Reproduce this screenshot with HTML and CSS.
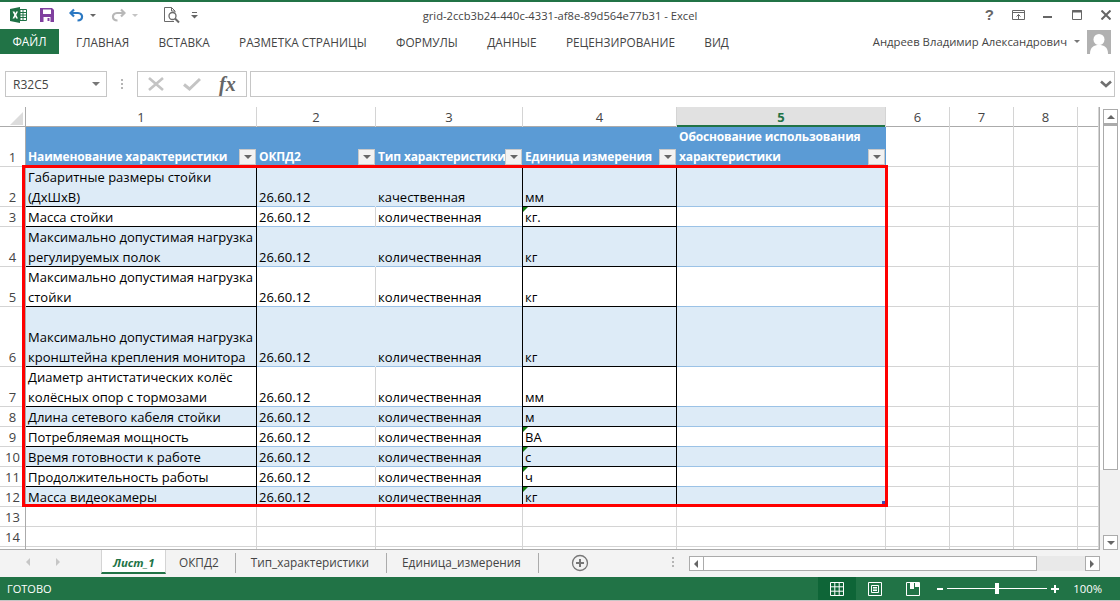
FILE: index.html
```html
<!DOCTYPE html>
<html lang="ru">
<head>
    <meta charset="UTF-8">
    <title>grid-2ccb3b24-440c-4331-af8e-89d564e77b31 - Excel</title>
    <link rel="stylesheet" href="styles.css">
</head>
<body>
<div class="app">
    <div class="titlebar">
        <div class="qat">
            <svg class="qat-excel" width="17" height="16" viewBox="0 0 17 16"><path d="M0 2 10 0V16L0 14Z" fill="#1e7145"/><path d="M10 2.5H16.5V13.5H10Z" fill="#fff" stroke="#1e7145"/><path d="M10 5.5H16M10 8H16M10 10.500H16M13 3V13" stroke="#1e7145"/><path d="M2.500 4.500H4.500L5.300 6.500 6.200 4.500H8L6.300 8 8 11.500H6.100L5.200 9.400 4.300 11.500H2.500L4.300 8Z" fill="#fff"/></svg>
            <svg class="qat-save" width="14" height="14" viewBox="0 0 14 14"><path d="M0 0H12L14 2V14H0Z" fill="#80409f"/><path d="M3 1.500H11V6H3Z" fill="#fff"/><path d="M3.500 9H10.500V14H3.500Z" fill="#fff"/><path d="M7.500 10H9.500V13H7.500Z" fill="#80409f"/></svg>
            <svg class="qat-undo" width="15" height="14" viewBox="0 0 15 14"><path d="M5 1.500 1.500 5 5 8.500" fill="none" stroke="#2b78c2" stroke-width="2.200"/><path d="M2 5H9C14.500 5 14.500 12.500 8.500 12.500" fill="none" stroke="#2b78c2" stroke-width="2.200"/></svg>
            <span class="qat-arrow"></span>
            <svg class="qat-redo" width="15" height="14" viewBox="0 0 15 14"><path d="M10 1.500 13.500 5 10 8.500" fill="none" stroke="#b8b8b8" stroke-width="2.200"/><path d="M13 5H6C.5 5 .5 12.500 6.500 12.500" fill="none" stroke="#b8b8b8" stroke-width="2.200"/></svg>
            <span class="qat-arrow qat-arrow-off"></span>
            <svg class="qat-preview" width="16" height="17" viewBox="0 0 16 17"><path d="M10 14.500H.5V.5H7.500L11 4V5.500" fill="none" stroke="#6a6a6a"/><path d="M7.500.5V4H11" fill="none" stroke="#6a6a6a"/><circle cx="8.500" cy="9" r="3.500" fill="#fff" stroke="#6a6a6a" stroke-width="1.300"/><path d="M11 11.500 15 15.500" stroke="#6a6a6a" stroke-width="2"/></svg>
            <svg class="qat-more" width="7" height="7" viewBox="0 0 7 7"><path d="M1 .5H6" stroke="#666"/><path d="M0 3H7L3.500 6.500Z" fill="#666"/></svg>
        </div>
        <div class="doc-title">grid-2ccb3b24-440c-4331-af8e-89d564e77b31 - Excel</div>
        <div class="winctl">
            <span class="help">?</span>
            <svg class="ctl-display" width="13" height="10" viewBox="0 0 13 10"><path d="M.5.5H12.500V9.500H.5Z" fill="none" stroke="#666"/><path d="M.5 2.500H12.500" stroke="#666"/><path d="M6.500 9V4.500M4.500 6.500 6.500 4.500 8.500 6.500" fill="none" stroke="#666"/></svg>
            <svg class="ctl-min" width="9" height="10" viewBox="0 0 9 10"><path d="M0 7H9" stroke="#666" stroke-width="2"/></svg>
            <svg class="ctl-max" width="10" height="10" viewBox="0 0 10 10"><path d="M.5.5H9.500V9.500H.5Z" fill="none" stroke="#666"/><path d="M0 1.500H10" stroke="#666" stroke-width="2"/></svg>
            <svg class="ctl-close" width="10" height="10" viewBox="0 0 10 10"><path d="M.5.5 9.500 9.500M9.500.5 .5 9.500" stroke="#666" stroke-width="2"/></svg>
        </div>
    </div>

    <div class="ribbon-tabs">
        <div class="file-tab">ФАЙЛ</div>
        <nav class="tab-list">
            <span>ГЛАВНАЯ</span>
            <span>ВСТАВКА</span>
            <span>РАЗМЕТКА СТРАНИЦЫ</span>
            <span>ФОРМУЛЫ</span>
            <span>ДАННЫЕ</span>
            <span>РЕЦЕНЗИРОВАНИЕ</span>
            <span>ВИД</span>
        </nav>
        <div class="user">
            <span class="user-name">Андреев Владимир Александрович</span>
            <span class="user-arrow"></span>
            <svg class="avatar" width="24" height="24" viewBox="0 0 24 24"><path d="M0 0H24V24H0Z" fill="#b1b1b1"/><circle cx="12" cy="9.500" r="5.500" fill="#fff"/><path d="M3 24C3 17 7 15 12 15S21 17 21 24Z" fill="#fff"/></svg>
        </div>
    </div>

    <div class="formula-bar">
        <div class="name-box"><span>R32C5</span><i class="name-arrow"></i></div>
        <div class="dots"></div>
        <div class="fx-box">
            <svg width="18" height="16" viewBox="0 0 18 16"><path d="M2 2 16 14M16 2 2 14" stroke="#c4c4c4" stroke-width="2.600"/></svg>
            <svg width="18" height="14" viewBox="0 0 18 14"><path d="M1 7.500 6.500 12 17 2" fill="none" stroke="#c4c4c4" stroke-width="3"/></svg>
            <span class="fx">fx</span>
        </div>
        <div class="formula-input">
            <svg width="12" height="8" viewBox="0 0 12 8"><path d="M1 1.500 6 6 11 1.500" fill="none" stroke="#707070" stroke-width="2.600"/></svg>
        </div>
    </div>

    <div class="sheet-area">
        <div class="grid-wrap">
            <table class="grid">
                <colgroup>
                    <col class="w-head"><col class="w-1"><col class="w-2"><col class="w-3"><col class="w-4"><col class="w-5"><col class="w-n"><col class="w-n"><col class="w-n"><col class="w-last">
                </colgroup>
                <tr class="col-head">
                    <td class="corner"><svg width="13" height="13" viewBox="0 0 13 13"><path d="M13 0V13H0Z" fill="#dcdcdc"/></svg></td>
                    <td>1</td><td>2</td><td>3</td><td>4</td><td class="col-on">5</td><td>6</td><td>7</td><td>8</td><td></td>
                </tr>
                <tr class="h40 tbl-head">
                    <td class="rn">1</td>
                    <td>Наименование характеристики<i class="filter"></i></td>
                    <td>ОКПД2<i class="filter"></i></td>
                    <td>Тип характеристики<i class="filter"></i></td>
                    <td>Единица измерения<i class="filter"></i></td>
                    <td>Обоснование использования<br>характеристики<i class="filter"></i></td>
                    <td class="e"></td><td class="e"></td><td class="e"></td><td class="e"></td>
                </tr>
                <tr class="h40 stripe">
                    <td class="rn">2</td><td class="c1">Габаритные размеры стойки<br>(ДхШхВ)</td><td class="c2">26.60.12</td><td class="c3">качественная</td><td class="c4">мм</td><td class="c5"></td>
                    <td class="e"></td><td class="e"></td><td class="e"></td><td class="e"></td>
                </tr>
                <tr>
                    <td class="rn">3</td><td class="c1">Масса стойки</td><td class="c2">26.60.12</td><td class="c3">количественная</td><td class="c4 mark">кг.</td><td class="c5"></td>
                    <td class="e"></td><td class="e"></td><td class="e"></td><td class="e"></td>
                </tr>
                <tr class="h40 stripe">
                    <td class="rn">4</td><td class="c1">Максимально допустимая нагрузка<br>регулируемых полок</td><td class="c2">26.60.12</td><td class="c3">количественная</td><td class="c4">кг</td><td class="c5"></td>
                    <td class="e"></td><td class="e"></td><td class="e"></td><td class="e"></td>
                </tr>
                <tr class="h40">
                    <td class="rn">5</td><td class="c1">Максимально допустимая нагрузка<br>стойки</td><td class="c2">26.60.12</td><td class="c3">количественная</td><td class="c4">кг</td><td class="c5"></td>
                    <td class="e"></td><td class="e"></td><td class="e"></td><td class="e"></td>
                </tr>
                <tr class="h60 stripe">
                    <td class="rn">6</td><td class="c1">Максимально допустимая нагрузка<br>кронштейна крепления монитора</td><td class="c2">26.60.12</td><td class="c3">количественная</td><td class="c4">кг</td><td class="c5"></td>
                    <td class="e"></td><td class="e"></td><td class="e"></td><td class="e"></td>
                </tr>
                <tr class="h40">
                    <td class="rn">7</td><td class="c1">Диаметр антистатических колёс<br>колёсных опор с тормозами</td><td class="c2">26.60.12</td><td class="c3">количественная</td><td class="c4">мм</td><td class="c5"></td>
                    <td class="e"></td><td class="e"></td><td class="e"></td><td class="e"></td>
                </tr>
                <tr class="stripe">
                    <td class="rn">8</td><td class="c1">Длина сетевого кабеля стойки</td><td class="c2">26.60.12</td><td class="c3">количественная</td><td class="c4">м</td><td class="c5"></td>
                    <td class="e"></td><td class="e"></td><td class="e"></td><td class="e"></td>
                </tr>
                <tr>
                    <td class="rn">9</td><td class="c1">Потребляемая мощность</td><td class="c2">26.60.12</td><td class="c3">количественная</td><td class="c4 mark">ВА</td><td class="c5"></td>
                    <td class="e"></td><td class="e"></td><td class="e"></td><td class="e"></td>
                </tr>
                <tr class="stripe">
                    <td class="rn">10</td><td class="c1">Время готовности к работе</td><td class="c2">26.60.12</td><td class="c3">количественная</td><td class="c4 mark">с</td><td class="c5"></td>
                    <td class="e"></td><td class="e"></td><td class="e"></td><td class="e"></td>
                </tr>
                <tr>
                    <td class="rn">11</td><td class="c1">Продолжительность работы</td><td class="c2">26.60.12</td><td class="c3">количественная</td><td class="c4 mark">ч</td><td class="c5"></td>
                    <td class="e"></td><td class="e"></td><td class="e"></td><td class="e"></td>
                </tr>
                <tr class="stripe">
                    <td class="rn">12</td><td class="c1">Масса видеокамеры</td><td class="c2">26.60.12</td><td class="c3">количественная</td><td class="c4 mark">кг</td><td class="c5"></td>
                    <td class="e"></td><td class="e"></td><td class="e"></td><td class="e"></td>
                </tr>
                <tr>
                    <td class="rn">13</td><td class="e"></td><td class="e"></td><td class="e"></td><td class="e"></td><td class="e"></td>
                    <td class="e"></td><td class="e"></td><td class="e"></td><td class="e"></td>
                </tr>
                <tr>
                    <td class="rn">14</td><td class="e"></td><td class="e"></td><td class="e"></td><td class="e"></td><td class="e"></td>
                    <td class="e"></td><td class="e"></td><td class="e"></td><td class="e"></td>
                </tr>
                <tr>
                    <td class="rn"></td><td class="e"></td><td class="e"></td><td class="e"></td><td class="e"></td><td class="e"></td>
                    <td class="e"></td><td class="e"></td><td class="e"></td><td class="e"></td>
                </tr>
            </table>
            <div class="selection"><i class="sel-handle"></i></div>
        </div>
        <div class="vscroll">
            <div class="vscroll-top">
                <div class="sbtn"><i class="arr-up"></i></div>
                <div class="vthumb"></div>
            </div>
            <div class="vscroll-rest">
                <div class="sbtn"><i class="arr-down"></i></div>
            </div>
        </div>
    </div>

    <div class="sheet-tabs">
        <div class="tab-nav"><i class="nav-left"></i><i class="nav-right"></i></div>
        <div class="sheet-tab on">Лист_1</div>
        <div class="sheet-tab tab-short">ОКПД2</div>
        <div class="sheet-tab">Тип_характеристики</div>
        <div class="sheet-tab">Единица_измерения</div>
        <svg class="add-sheet" width="18" height="18" viewBox="0 0 18 18"><circle cx="9" cy="9" r="7.500" fill="none" stroke="#777" stroke-width="1.300"/><path d="M9 5V13M5 9H13" stroke="#777" stroke-width="2"/></svg>
        <div class="dots tabs-dots"></div>
        <div class="hscroll">
            <div class="sbtn"><i class="arr-left"></i></div>
            <div class="hthumb"></div>
            <div class="htrack"></div>
            <div class="sbtn"><i class="arr-right"></i></div>
        </div>
    </div>

    <div class="statusbar">
        <span class="ready">ГОТОВО</span>
        <div class="status-right">
            <div class="view on">
                <svg width="14" height="14" viewBox="0 0 14 14"><path d="M.5.5H13.500V13.500H.5ZM.5 4.800H13.500M.5 9.200H13.500M4.800.5V13.500M9.200.5V13.500" fill="none" stroke="#fff"/></svg>
            </div>
            <div class="view">
                <svg width="14" height="14" viewBox="0 0 14 14"><path d="M.5.5H13.500V13.500H.5Z" fill="none" stroke="#fff"/><path d="M3.500 3.500H10.500V10.500H3.500ZM5 5.500H9M5 7H9M5 8.500H9" fill="none" stroke="#fff"/></svg>
            </div>
            <div class="view">
                <svg width="14" height="14" viewBox="0 0 14 14"><path d="M.5.5H13.500V13.500H.5Z" fill="none" stroke="#fff"/><path d="M4 1H8V7H4ZM9 1H13V5H9Z" fill="#fff"/></svg>
            </div>
            <div class="zoom">
                <span class="zoom-minus"></span>
                <div class="slider"><i class="slider-thumb"></i></div>
                <span class="zoom-plus"></span>
            </div>
            <span class="zoom-val">100%</span>
        </div>
    </div>
</div>
</body>
</html>
```

FILE: styles.css
```css
* {
    box-sizing: border-box;
}

html, body {
    margin: 0;
    padding: 0;
    background: #fff;
}

body {
    font-family: "Open Sans", "Noto Sans", sans-serif;
    color: #444;
    overflow: hidden;
}

.app {
    width: 1120px;
    height: 601px;
    display: flex;
    flex-direction: column;
    border-top: 2px solid #217346;
    border-bottom: 1px solid #c6c6c6;
    overflow: hidden;
}

/* title bar */
.titlebar {
    height: 27px;
    flex: none;
    display: grid;
    grid-template-columns: 1fr auto 1fr;
    align-items: center;
}

.qat {
    display: flex;
    align-items: center;
    padding-left: 10px;
    padding-bottom: 1px;
}

.qat-save { margin-left: 13px; }
.qat-undo { margin-left: 15px; }
.qat-redo { margin-left: 15px; }
.qat-preview { margin-left: 26px; }
.qat-more { margin-left: 11px; }

.qat-arrow {
    width: 0;
    height: 0;
    margin-left: 6px;
    border-left: 3px solid transparent;
    border-right: 3px solid transparent;
    border-top: 3px solid #666;
}

.qat-arrow-off {
    border-top-color: #c4c4c4;
}

.doc-title {
    font-size: 11.200px;
    color: #444;
}

.winctl {
    display: flex;
    align-items: center;
    justify-content: flex-end;
    padding-right: 9px;
    padding-bottom: 2px;
}

.help {
    font-family: "Liberation Sans", sans-serif;
    font-weight: bold;
    font-size: 15px;
    color: #666;
    line-height: 14px;
    margin-right: 18px;
}

.ctl-min { margin-left: 18px; }
.ctl-max { margin-left: 20px; }
.ctl-close { margin-left: 19px; }

/* ribbon tabs */
.ribbon-tabs {
    height: 25px;
    flex: none;
    display: flex;
    align-items: center;
    font-size: 11.800px;
}

.file-tab {
    width: 59px;
    height: 25px;
    line-height: 24px;
    text-align: center;
    background: #217346;
    color: #fff;
}

.tab-list {
    display: flex;
    gap: 29.300px;
    margin-left: 17px;
    flex: 1;
}

.user {
    display: flex;
    align-items: center;
    padding-right: 9px;
}

.user-name {
    font-size: 11.300px;
}

.user-arrow {
    width: 0;
    height: 0;
    margin: 0 7px 0 7px;
    border-left: 3px solid transparent;
    border-right: 3px solid transparent;
    border-top: 3px solid #777;
}

/* formula bar */
.formula-bar {
    height: 26px;
    flex: none;
    margin: 17px 0 10px;
    padding: 0 5px;
    display: flex;
}

.name-box {
    width: 102px;
    border: 1px solid #c6c6c6;
    display: flex;
    align-items: center;
    justify-content: space-between;
    padding: 0 6px 0 7px;
    font-size: 12px;
}

.name-arrow {
    width: 0;
    height: 0;
    border-left: 4px solid transparent;
    border-right: 4px solid transparent;
    border-top: 4px solid #777;
}

.dots {
    width: 2px;
    height: 10px;
    margin: 8px 14px 0 14px;
    background: repeating-linear-gradient(#b5b5b5 0 2px, transparent 2px 4px);
}

.fx-box {
    width: 110px;
    border: 1px solid #c6c6c6;
    display: flex;
    align-items: center;
    padding-left: 9px;
    gap: 18px;
}

.fx {
    font-family: "Liberation Serif", serif;
    font-style: italic;
    font-weight: bold;
    font-size: 20px;
    color: #666;
    line-height: 20px;
}

.formula-input {
    flex: 1;
    margin-left: 3px;
    border: 1px solid #c6c6c6;
    display: flex;
    align-items: center;
    justify-content: flex-end;
    padding-right: 2px;
}

/* sheet */
.sheet-area {
    height: 443px;
    flex: none;
    display: flex;
}

.grid-wrap {
    position: relative;
    width: 1100px;
    height: 443px;
    overflow: hidden;
    border-right: 1px solid #ababab;
    border-bottom: 1px solid #ababab;
}

.grid {
    table-layout: fixed;
    width: 1099px;
    border-collapse: separate;
    border-spacing: 0;
    font-family: "Open Sans", "Noto Sans", sans-serif;
    font-size: 13px;
    color: #000;
}

.w-head { width: 26px; }
.w-1 { width: 231px; }
.w-2 { width: 119px; }
.w-3 { width: 147px; }
.w-4 { width: 154px; }
.w-5 { width: 209px; }
.w-n { width: 64px; }
.w-last { width: 21px; }

.grid tr {
    height: 20px;
}

.grid tr.h40 {
    height: 40px;
}

.grid tr.h60 {
    height: 60px;
}

/* the bottom line is a shadow so that a 20px text line fills a 20px row */
.grid td {
    --line: #d4d4d4;
    padding: 0 0 0 2px;
    vertical-align: bottom;
    line-height: 20px;
    white-space: nowrap;
    overflow: hidden;
    border-right: 1px solid #d4d4d4;
    box-shadow: inset 0 -1px 0 var(--line);
}

.col-head td {
    --line: #ababab;
    padding: 0;
    text-align: center;
    color: #444;
    line-height: 19px;
    vertical-align: middle;
}

.col-head .corner {
    border-right-color: #ababab;
    padding: 2px 2px 0 0;
    text-align: right;
}

.corner svg {
    display: block;
    margin-left: auto;
}

.col-head .col-on {
    background: #e1e1e1;
    color: #217346;
    font-weight: bold;
    box-shadow: inset 0 -2px 0 #217346;
}

.grid .rn {
    padding: 0;
    text-align: center;
    color: #444;
    border-right-color: #ababab;
}

.tbl-head td:not(.rn):not(.e) {
    --line: #5b9bd5;
    position: relative;
    background: #5b9bd5;
    color: #fff;
    font-size: 12px;
    font-weight: bold;
    letter-spacing: -0.150px;
    border-right-color: #5b9bd5;
}

.filter {
    position: absolute;
    right: 0;
    bottom: 2px;
    width: 17px;
    height: 16px;
    background: #f2f2f2;
    border: 1px solid #c9c9c9;
}

.filter::after {
    content: "";
    position: absolute;
    left: 4px;
    top: 5px;
    border-left: 4px solid transparent;
    border-right: 4px solid transparent;
    border-top: 4px solid #666;
}

.stripe td:not(.rn):not(.e) {
    background: #ddebf7;
}

.grid .c1,
.grid .c4 {
    --line: #000;
    border-right-color: #000;
}

.grid .c3 {
    --line: #9bc2e6;
    border-right-color: #000;
}

.grid .c2,
.grid .c5 {
    --line: #9bc2e6;
}

.stripe .c2 {
    border-right-color: #ddebf7;
}

.mark {
    position: relative;
}

.mark::before {
    content: "";
    position: absolute;
    left: 0;
    top: 0;
    border-top: 5px solid #107c10;
    border-right: 5px solid transparent;
}

.selection {
    position: absolute;
    left: 22px;
    top: 58px;
    width: 866px;
    height: 342px;
    border: 3px solid #f00;
}

.sel-handle {
    position: absolute;
    right: 0;
    bottom: 0;
    width: 3px;
    height: 3px;
    background: #3f51b5;
}

/* scrollbars */
.vscroll {
    flex: 1;
    display: flex;
    flex-direction: column;
}

.vscroll-top {
    padding: 2px 2px 0 3px;
}

.vthumb {
    height: 346px;
    border: 1px solid #ababab;
    border-top-width: 2px;
}

.vscroll-rest {
    flex: 1;
    background: #f1f1f1;
    padding: 0 2px 0 3px;
    display: flex;
    align-items: flex-end;
}

.sbtn {
    width: 15px;
    height: 15px;
    flex: none;
    background: #fff;
    border: 1px solid #ababab;
    display: flex;
    align-items: center;
    justify-content: center;
}

.arr-up,
.arr-down,
.arr-left,
.arr-right,
.nav-left,
.nav-right {
    width: 0;
    height: 0;
}

.arr-up {
    border-left: 4px solid transparent;
    border-right: 4px solid transparent;
    border-bottom: 4px solid #666;
}

.arr-down {
    border-left: 4px solid transparent;
    border-right: 4px solid transparent;
    border-top: 4px solid #666;
}

.arr-left {
    border-top: 4px solid transparent;
    border-bottom: 4px solid transparent;
    border-right: 4px solid #666;
}

.arr-right {
    border-top: 4px solid transparent;
    border-bottom: 4px solid transparent;
    border-left: 4px solid #666;
}

/* sheet tabs */
.sheet-tabs {
    height: 27px;
    flex: none;
    background: #f3f3f3;
    display: flex;
    align-items: flex-start;
    font-size: 11.800px;
}

.tab-nav {
    width: 101px;
    height: 24px;
    padding-left: 26px;
    display: flex;
    align-items: center;
    gap: 26px;
}

.nav-left {
    border-top: 4px solid transparent;
    border-bottom: 4px solid transparent;
    border-right: 4px solid #c6c6c6;
}

.nav-right {
    border-top: 4px solid transparent;
    border-bottom: 4px solid transparent;
    border-left: 4px solid #c6c6c6;
}

.sheet-tab {
    height: 20px;
    margin-top: 3px;
    line-height: 19px;
    padding: 0 17px 0 15px;
    border-right: 1px solid #ababab;
}

.sheet-tab.tab-short {
    padding: 0 16px 0 13px;
}

.sheet-tab.on {
    width: 65px;
    height: 24px;
    margin-top: 0;
    line-height: 25px;
    padding: 0 0 0 11px;
    background: #fff;
    color: #217346;
    font-size: 11.400px;
    font-weight: bold;
    font-style: italic;
    border: 1px solid #d4d4d4;
    border-top: 0;
    border-bottom: 2px solid #217346;
}

.add-sheet {
    margin: 4px 0 0 32px;
}

.tabs-dots {
    margin: 7px 0 0 83px;
}

.hscroll {
    display: flex;
    margin: 6px 0 0 15px;
    width: 411px;
}

.hthumb {
    width: 333px;
    height: 15px;
    background: #fff;
    border: 1px solid #ababab;
    border-left: 0;
}

.htrack {
    flex: 1;
    height: 15px;
    background: #e9e9e9;
}

/* status bar */
.statusbar {
    flex: 1;
    background: #217346;
    color: #fff;
    font-size: 11px;
    display: flex;
    align-items: center;
    justify-content: space-between;
    padding-left: 7px;
}

.status-right {
    display: flex;
    align-items: center;
    height: 100%;
    padding-right: 18px;
}

.view {
    width: 38px;
    height: 100%;
    display: flex;
    align-items: center;
    justify-content: center;
}

.view.on {
    background: #0e6537;
}

.zoom {
    display: flex;
    align-items: center;
    margin-left: 5px;
}

.zoom-minus {
    width: 6px;
    height: 2px;
    background: #fff;
}

.zoom-plus {
    width: 8px;
    height: 8px;
    background: linear-gradient(#fff, #fff) center / 8px 2px no-repeat, linear-gradient(#fff, #fff) center / 2px 8px no-repeat;
}

.slider {
    position: relative;
    width: 100px;
    height: 1px;
    margin: 0 4px;
    background: #fff;
}

.slider-thumb {
    position: absolute;
    left: 48px;
    top: -5px;
    width: 4px;
    height: 11px;
    background: #fff;
}

.zoom-val {
    margin-left: 14px;
    font-size: 11.300px;
}
```
